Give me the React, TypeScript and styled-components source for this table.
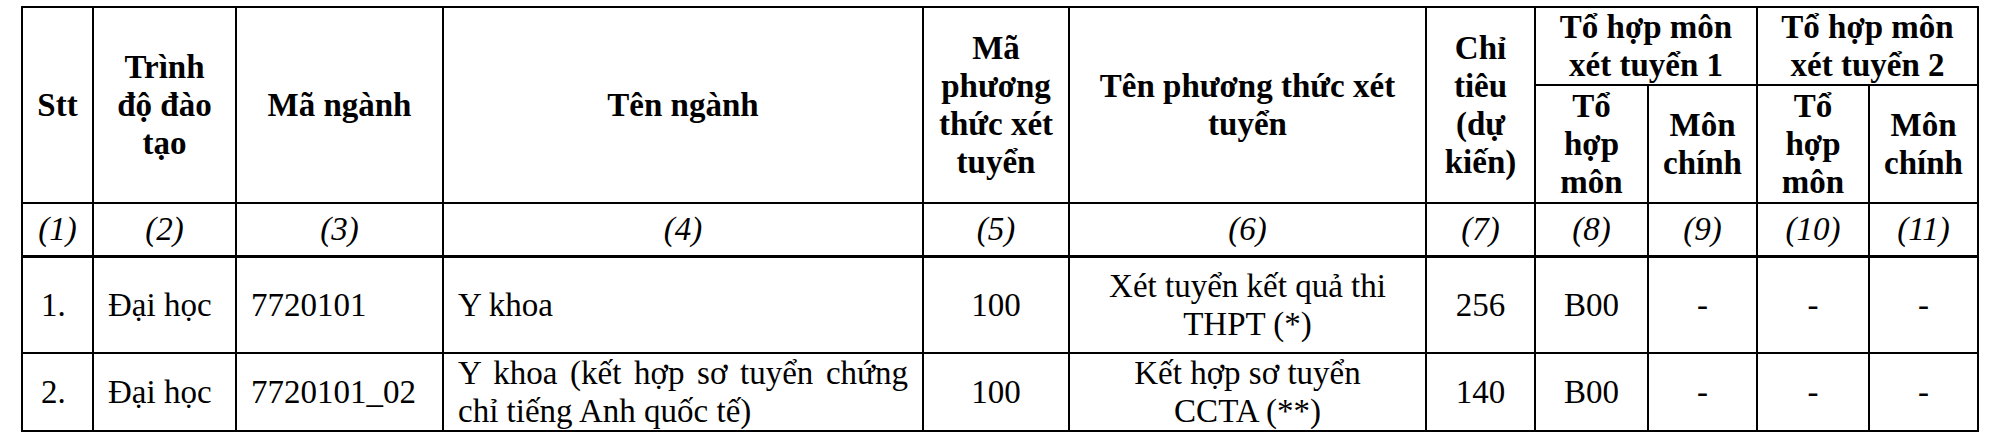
import React from "react";
import styled, { createGlobalStyle } from "styled-components";

const GlobalStyle = createGlobalStyle`
    html, body {
        margin: 0;
        padding: 0;
        background: #ffffff;
    }
`;

const Page = styled.div`
    padding: 6px 0 0 21px;
    background: #ffffff;
    font-family: "Liberation Serif", "Times New Roman", serif;
    color: #000;
`;

const Table = styled.table`
    border-collapse: collapse;
    table-layout: fixed;
    width: 1958px;
    font-size: 33px;
    line-height: 38px;
`;

const Row = styled.tr<{ $h: number; $thick?: boolean }>`
    height: ${({ $h }) => $h}px;
    ${({ $thick }) => ($thick ? "border-bottom: 3px solid #000;" : "")}
`;

const HeadCell = styled.th`
    border: 2px solid #000;
    padding: 0 10px;
    font-weight: bold;
    text-align: center;
    vertical-align: middle;
`;

const IndexCell = styled.td`
    border: 2px solid #000;
    padding: 0 6px;
    font-style: italic;
    text-align: center;
    vertical-align: middle;
`;

const Cell = styled.td<{ $align?: "left" | "center" | "justify" }>`
    border: 2px solid #000;
    padding: 0 14px;
    text-align: ${({ $align }) => $align || "center"};
    vertical-align: middle;
`;

// numbering sits a little left of centre, like a Word list number
const SttCell = styled(Cell)`
    padding: 0 4px 0 18px;
    text-align: left;
`;

const widths = [71, 143, 207, 480, 146, 357, 109, 113, 109, 112, 109];

interface Program {
    stt: string;
    level: string;
    code: string;
    name: string;
    methodCode: string;
    methodName: string[];
    quota: number;
    combo1: string;
    main1: string;
    combo2: string;
    main2: string;
}

const programs: Program[] = [
    {
        stt: "1.",
        level: "Đại học",
        code: "7720101",
        name: "Y khoa",
        methodCode: "100",
        methodName: ["Xét tuyển kết quả thi", "THPT (*)"],
        quota: 256,
        combo1: "B00",
        main1: "-",
        combo2: "-",
        main2: "-",
    },
    {
        stt: "2.",
        level: "Đại học",
        code: "7720101_02",
        name: "Y khoa (kết hợp sơ tuyển chứng chỉ tiếng Anh quốc tế)",
        methodCode: "100",
        methodName: ["Kết hợp sơ tuyển", "CCTA (**)"],
        quota: 140,
        combo1: "B00",
        main1: "-",
        combo2: "-",
        main2: "-",
    },
];

const rowHeights = [97, 78];

const App: React.FC = () => {
    return (
        <Page>
            <GlobalStyle />
            <Table>
                <colgroup>
                    {widths.map((w, i) => (
                        <col key={i} style={{ width: w }} />
                    ))}
                </colgroup>
                <thead>
                    <Row $h={78}>
                        <HeadCell rowSpan={2}>Stt</HeadCell>
                        <HeadCell rowSpan={2}>Trình độ đào tạo</HeadCell>
                        <HeadCell rowSpan={2}>Mã ngành</HeadCell>
                        <HeadCell rowSpan={2}>Tên ngành</HeadCell>
                        <HeadCell rowSpan={2}>Mã phương thức xét tuyển</HeadCell>
                        <HeadCell rowSpan={2}>Tên phương thức xét tuyển</HeadCell>
                        <HeadCell rowSpan={2}>Chỉ tiêu (dự kiến)</HeadCell>
                        <HeadCell colSpan={2}>Tổ hợp môn xét tuyển 1</HeadCell>
                        <HeadCell colSpan={2}>Tổ hợp môn xét tuyển 2</HeadCell>
                    </Row>
                    <Row $h={118}>
                        <HeadCell>Tổ hợp môn</HeadCell>
                        <HeadCell>Môn chính</HeadCell>
                        <HeadCell>Tổ hợp môn</HeadCell>
                        <HeadCell>Môn chính</HeadCell>
                    </Row>
                    <Row $h={53} $thick>
                        {widths.map((_, i) => (
                            <IndexCell key={i}>({i + 1})</IndexCell>
                        ))}
                    </Row>
                </thead>
                <tbody>
                    {programs.map((p, i) => (
                        <Row key={p.stt} $h={rowHeights[i]}>
                            <SttCell>{p.stt}</SttCell>
                            <Cell $align="left">{p.level}</Cell>
                            <Cell $align="left">{p.code}</Cell>
                            <Cell $align="justify">{p.name}</Cell>
                            <Cell>{p.methodCode}</Cell>
                            <Cell>
                                {p.methodName[0]}
                                <br />
                                {p.methodName[1]}
                            </Cell>
                            <Cell>{p.quota}</Cell>
                            <Cell>{p.combo1}</Cell>
                            <Cell>{p.main1}</Cell>
                            <Cell>{p.combo2}</Cell>
                            <Cell>{p.main2}</Cell>
                        </Row>
                    ))}
                </tbody>
            </Table>
        </Page>
    );
};

export default App;
